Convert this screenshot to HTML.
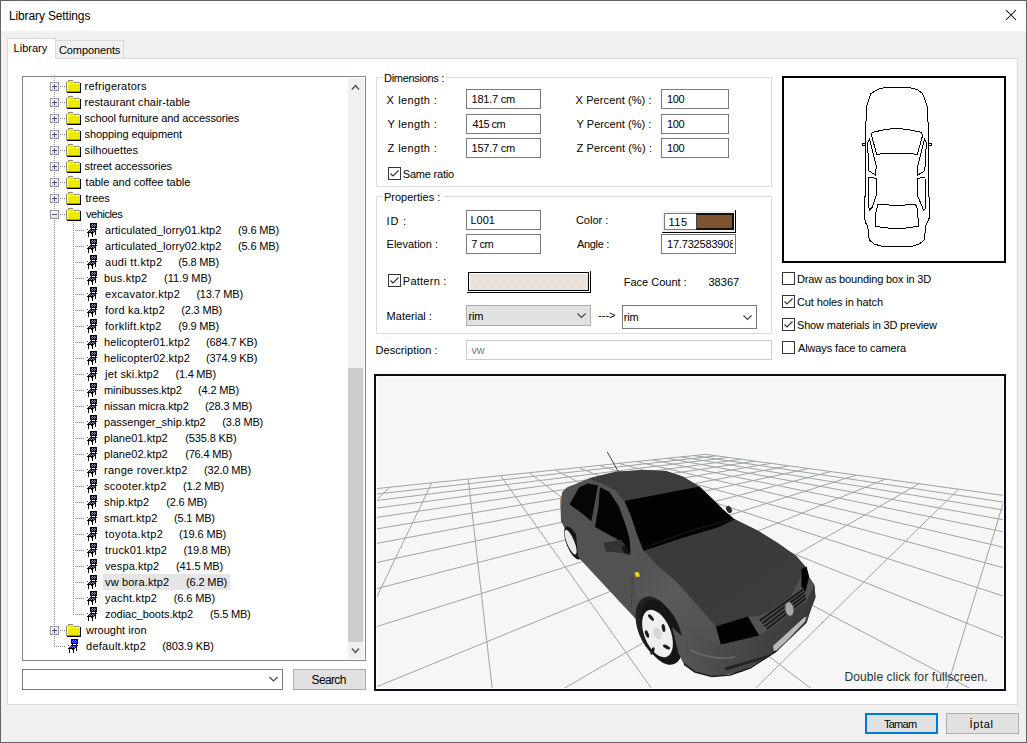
<!DOCTYPE html><html><head><meta charset="utf-8"><style>
html,body{margin:0;padding:0;}
body{width:1027px;height:743px;overflow:hidden;background:#f0f0f0;position:relative;font-family:"Liberation Sans", sans-serif;}
.t{position:absolute;white-space:pre;font-family:"Liberation Sans", sans-serif;}
.r{position:absolute;box-sizing:border-box;}
svg{position:absolute;left:0;top:0;}
</style></head><body><div class="r" style="left:0px;top:0px;width:1027px;height:743px;border:1px solid #636363;"></div><div class="r" style="left:1px;top:1px;width:1025px;height:30px;background:#fff;"></div><div class="t" style="left:9px;top:9px;font-size:12px;line-height:14px;color:#000;letter-spacing:-0.133px;">Library Settings</div><svg width="1027" height="40" style="left:0;top:0"><path d="M1006 10 L1016 20 M1016 10 L1006 20" stroke="#000" stroke-width="1.05"/></svg><div class="r" style="left:7px;top:58px;width:1011px;height:647px;background:#fff;border:1px solid #d9d9d9;"></div><div class="r" style="left:55px;top:40px;width:69px;height:19px;background:#f0f0f0;border:1px solid #d9d9d9;"></div><div class="r" style="left:7px;top:38px;width:49px;height:21px;background:#fff;border:1px solid #d9d9d9;border-bottom:none;"></div><div class="t" style="left:13.6px;top:42px;font-size:11px;line-height:13px;color:#000;letter-spacing:0.000px;">Library</div><div class="t" style="left:59px;top:44px;font-size:11px;line-height:13px;color:#000;letter-spacing:-0.111px;">Components</div><div class="r" style="left:22px;top:76px;width:344px;height:585px;background:#fff;border:1px solid #828790;"></div><div class="t" style="left:84.6px;top:80px;font-size:11px;line-height:13px;color:#000;letter-spacing:0.208px;">refrigerators</div><div class="t" style="left:84.6px;top:96px;font-size:11px;line-height:13px;color:#000;letter-spacing:0.081px;">restaurant chair-table</div><div class="t" style="left:84.6px;top:112px;font-size:11px;line-height:13px;color:#000;letter-spacing:-0.100px;">school furniture and accessories</div><div class="t" style="left:84.6px;top:128px;font-size:11px;line-height:13px;color:#000;letter-spacing:-0.094px;">shopping equipment</div><div class="t" style="left:84.6px;top:144px;font-size:11px;line-height:13px;color:#000;letter-spacing:0.080px;">silhouettes</div><div class="t" style="left:84.6px;top:160px;font-size:11px;line-height:13px;color:#000;letter-spacing:-0.076px;">street accessories</div><div class="t" style="left:85.6px;top:176px;font-size:11px;line-height:13px;color:#000;letter-spacing:-0.014px;">table and coffee table</div><div class="t" style="left:85.6px;top:192px;font-size:11px;line-height:13px;color:#000;letter-spacing:-0.050px;">trees</div><div class="t" style="left:86px;top:208px;font-size:11px;line-height:13px;color:#000;letter-spacing:-0.429px;">vehicles</div><div class="t" style="left:105px;top:224px;font-size:11px;line-height:13px;color:#000;letter-spacing:0.087px;">articulated_lorry01.ktp2</div><div class="t" style="left:238px;top:224px;font-size:11px;line-height:13px;color:#000;letter-spacing:-0.143px;">(9.6 MB)</div><div class="t" style="left:105px;top:240px;font-size:11px;line-height:13px;color:#000;letter-spacing:0.087px;">articulated_lorry02.ktp2</div><div class="t" style="left:238px;top:240px;font-size:11px;line-height:13px;color:#000;letter-spacing:-0.143px;">(5.6 MB)</div><div class="t" style="left:105px;top:256px;font-size:11px;line-height:13px;color:#000;letter-spacing:0.300px;">audi tt.ktp2</div><div class="t" style="left:178.3px;top:256px;font-size:11px;line-height:13px;color:#000;letter-spacing:-0.200px;">(5.8 MB)</div><div class="t" style="left:104px;top:272px;font-size:11px;line-height:13px;color:#000;letter-spacing:0.229px;">bus.ktp2</div><div class="t" style="left:164.1px;top:272px;font-size:11px;line-height:13px;color:#000;letter-spacing:-0.025px;">(11.9 MB)</div><div class="t" style="left:105px;top:288px;font-size:11px;line-height:13px;color:#000;letter-spacing:0.300px;">excavator.ktp2</div><div class="t" style="left:196.4px;top:288px;font-size:11px;line-height:13px;color:#000;letter-spacing:-0.200px;">(13.7 MB)</div><div class="t" style="left:105px;top:304px;font-size:11px;line-height:13px;color:#000;letter-spacing:0.209px;">ford ka.ktp2</div><div class="t" style="left:181.3px;top:304px;font-size:11px;line-height:13px;color:#000;letter-spacing:-0.171px;">(2.3 MB)</div><div class="t" style="left:105px;top:320px;font-size:11px;line-height:13px;color:#000;letter-spacing:0.275px;">forklift.ktp2</div><div class="t" style="left:178.3px;top:320px;font-size:11px;line-height:13px;color:#000;letter-spacing:-0.200px;">(9.9 MB)</div><div class="t" style="left:104px;top:336px;font-size:11px;line-height:13px;color:#000;letter-spacing:0.125px;">helicopter01.ktp2</div><div class="t" style="left:206.1px;top:336px;font-size:11px;line-height:13px;color:#000;letter-spacing:-0.144px;">(684.7 KB)</div><div class="t" style="left:104px;top:352px;font-size:11px;line-height:13px;color:#000;letter-spacing:0.125px;">helicopter02.ktp2</div><div class="t" style="left:206.1px;top:352px;font-size:11px;line-height:13px;color:#000;letter-spacing:-0.144px;">(374.9 KB)</div><div class="t" style="left:105px;top:368px;font-size:11px;line-height:13px;color:#000;letter-spacing:0.182px;">jet ski.ktp2</div><div class="t" style="left:175.5px;top:368px;font-size:11px;line-height:13px;color:#000;letter-spacing:-0.229px;">(1.4 MB)</div><div class="t" style="left:104px;top:384px;font-size:11px;line-height:13px;color:#000;letter-spacing:-0.064px;">minibusses.ktp2</div><div class="t" style="left:198.1px;top:384px;font-size:11px;line-height:13px;color:#000;letter-spacing:-0.171px;">(4.2 MB)</div><div class="t" style="left:104px;top:400px;font-size:11px;line-height:13px;color:#000;letter-spacing:-0.050px;">nissan micra.ktp2</div><div class="t" style="left:205px;top:400px;font-size:11px;line-height:13px;color:#000;letter-spacing:-0.138px;">(28.3 MB)</div><div class="t" style="left:104px;top:416px;font-size:11px;line-height:13px;color:#000;letter-spacing:0.011px;">passenger_ship.ktp2</div><div class="t" style="left:222.2px;top:416px;font-size:11px;line-height:13px;color:#000;letter-spacing:-0.157px;">(3.8 MB)</div><div class="t" style="left:104px;top:432px;font-size:11px;line-height:13px;color:#000;letter-spacing:0.064px;">plane01.ktp2</div><div class="t" style="left:185.2px;top:432px;font-size:11px;line-height:13px;color:#000;letter-spacing:-0.122px;">(535.8 KB)</div><div class="t" style="left:104px;top:448px;font-size:11px;line-height:13px;color:#000;letter-spacing:0.064px;">plane02.ktp2</div><div class="t" style="left:185.2px;top:448px;font-size:11px;line-height:13px;color:#000;letter-spacing:-0.175px;">(76.4 MB)</div><div class="t" style="left:104px;top:464px;font-size:11px;line-height:13px;color:#000;letter-spacing:0.260px;">range rover.ktp2</div><div class="t" style="left:204.1px;top:464px;font-size:11px;line-height:13px;color:#000;letter-spacing:-0.162px;">(32.0 MB)</div><div class="t" style="left:104px;top:480px;font-size:11px;line-height:13px;color:#000;letter-spacing:0.273px;">scooter.ktp2</div><div class="t" style="left:183px;top:480px;font-size:11px;line-height:13px;color:#000;letter-spacing:-0.157px;">(1.2 MB)</div><div class="t" style="left:104px;top:496px;font-size:11px;line-height:13px;color:#000;letter-spacing:0.150px;">ship.ktp2</div><div class="t" style="left:166.2px;top:496px;font-size:11px;line-height:13px;color:#000;letter-spacing:-0.157px;">(2.6 MB)</div><div class="t" style="left:104px;top:512px;font-size:11px;line-height:13px;color:#000;letter-spacing:0.222px;">smart.ktp2</div><div class="t" style="left:174px;top:512px;font-size:11px;line-height:13px;color:#000;letter-spacing:-0.171px;">(5.1 MB)</div><div class="t" style="left:105px;top:528px;font-size:11px;line-height:13px;color:#000;letter-spacing:0.410px;">toyota.ktp2</div><div class="t" style="left:179.1px;top:528px;font-size:11px;line-height:13px;color:#000;letter-spacing:-0.138px;">(19.6 MB)</div><div class="t" style="left:105px;top:544px;font-size:11px;line-height:13px;color:#000;letter-spacing:0.182px;">truck01.ktp2</div><div class="t" style="left:183.4px;top:544px;font-size:11px;line-height:13px;color:#000;letter-spacing:-0.138px;">(19.8 MB)</div><div class="t" style="left:105px;top:560px;font-size:11px;line-height:13px;color:#000;letter-spacing:0.100px;">vespa.ktp2</div><div class="t" style="left:176.1px;top:560px;font-size:11px;line-height:13px;color:#000;letter-spacing:-0.162px;">(41.5 MB)</div><div class="r" style="left:103px;top:574px;width:127px;height:16px;background:#e5e5e5;"></div><div class="t" style="left:105px;top:576px;font-size:11px;line-height:13px;color:#000;letter-spacing:0.164px;">vw bora.ktp2</div><div class="t" style="left:185.9px;top:576px;font-size:11px;line-height:13px;color:#000;letter-spacing:-0.114px;">(6.2 MB)</div><div class="t" style="left:105px;top:592px;font-size:11px;line-height:13px;color:#000;letter-spacing:0.200px;">yacht.ktp2</div><div class="t" style="left:173.7px;top:592px;font-size:11px;line-height:13px;color:#000;letter-spacing:-0.086px;">(6.6 MB)</div><div class="t" style="left:105px;top:608px;font-size:11px;line-height:13px;color:#000;letter-spacing:-0.031px;">zodiac_boots.ktp2</div><div class="t" style="left:210px;top:608px;font-size:11px;line-height:13px;color:#000;letter-spacing:-0.200px;">(5.5 MB)</div><div class="t" style="left:86px;top:624px;font-size:11px;line-height:13px;color:#000;letter-spacing:0.000px;">wrought iron</div><div class="t" style="left:86px;top:640px;font-size:11px;line-height:13px;color:#000;letter-spacing:0.273px;">default.ktp2</div><div class="t" style="left:162.3px;top:640px;font-size:11px;line-height:13px;color:#000;letter-spacing:-0.111px;">(803.9 KB)</div><svg width="1027" height="743" style="left:0;top:0;pointer-events:none" shape-rendering="crispEdges"><defs>
<linearGradient id="pb" x1="0" y1="0" x2="0" y2="1"><stop offset="0" stop-color="#fff"/><stop offset="0.5" stop-color="#f4f4f4"/><stop offset="1" stop-color="#dadada"/></linearGradient>
<pattern id="ychk" x="0" y="0" width="2" height="2" patternUnits="userSpaceOnUse"><rect width="2" height="2" fill="#c6c68a"/><rect width="1" height="1" fill="#ffff00"/><rect x="1" y="1" width="1" height="1" fill="#ffff00"/></pattern>
<pattern id="bchk" x="0" y="0" width="2" height="2" patternUnits="userSpaceOnUse"><rect width="2" height="2" fill="#8080a0"/><rect width="1" height="1" fill="#0000ff"/><rect x="1" y="1" width="1" height="1" fill="#0000ff"/></pattern>
<g id="fold" shape-rendering="crispEdges">
<rect x="2" y="2" width="5" height="1" fill="#8c8c8c"/>
<rect x="1" y="3" width="7" height="2" fill="url(#ychk)"/>
<rect x="0" y="4" width="1" height="10" fill="#8c8c8c"/>
<rect x="8" y="4" width="6" height="1" fill="#8c8c8c"/>
<rect x="1" y="5" width="13" height="1" fill="#ffffff"/>
<rect x="1" y="6" width="1" height="7" fill="#ffffff"/>
<rect x="2" y="6" width="12" height="7" fill="url(#ychk)"/>
<rect x="0" y="13" width="14" height="1" fill="#8c8c8c"/>
<rect x="14" y="5" width="1" height="10" fill="#000"/>
<rect x="1" y="14" width="14" height="1" fill="#000"/>
</g>
<g id="chair" shape-rendering="crispEdges">
<rect x="3" y="1" width="7" height="5" fill="#000"/>
<rect x="4" y="2" width="5" height="3" fill="url(#bchk)"/>
<rect x="4" y="6" width="1" height="1" fill="#000"/><rect x="8" y="6" width="1" height="1" fill="#000"/>
<rect x="3" y="7" width="7" height="1" fill="#000"/>
<rect x="0" y="7" width="1" height="1" fill="#008080"/>
<rect x="2" y="8" width="1" height="1" fill="#000"/><rect x="3" y="8" width="5" height="1" fill="url(#bchk)"/><rect x="8" y="8" width="1" height="5" fill="#000"/>
<rect x="1" y="9" width="1" height="1" fill="#000"/><rect x="2" y="9" width="5" height="1" fill="url(#bchk)"/><rect x="7" y="9" width="1" height="1" fill="#000"/>
<rect x="0" y="10" width="7" height="1" fill="#000"/>
<rect x="1" y="11" width="1" height="4" fill="#000"/><rect x="5" y="11" width="1" height="4" fill="#000"/><rect x="4" y="11" width="1" height="1" fill="#000"/>
</g>
</defs><rect x="50.5" y="82.5" width="8" height="8" rx="1" fill="url(#pb)" stroke="#969696"/><rect x="52" y="86" width="5" height="1" fill="#3a5795"/><rect x="54" y="84" width="1" height="5" fill="#3a5795"/><rect x="60" y="86" width="1" height="1" fill="#8e8e8e"/><rect x="62" y="86" width="1" height="1" fill="#8e8e8e"/><rect x="64" y="86" width="1" height="1" fill="#8e8e8e"/><use href="#fold" x="66" y="78"/><rect x="50.5" y="98.5" width="8" height="8" rx="1" fill="url(#pb)" stroke="#969696"/><rect x="52" y="102" width="5" height="1" fill="#3a5795"/><rect x="54" y="100" width="1" height="5" fill="#3a5795"/><rect x="60" y="102" width="1" height="1" fill="#8e8e8e"/><rect x="62" y="102" width="1" height="1" fill="#8e8e8e"/><rect x="64" y="102" width="1" height="1" fill="#8e8e8e"/><use href="#fold" x="66" y="94"/><rect x="50.5" y="114.5" width="8" height="8" rx="1" fill="url(#pb)" stroke="#969696"/><rect x="52" y="118" width="5" height="1" fill="#3a5795"/><rect x="54" y="116" width="1" height="5" fill="#3a5795"/><rect x="60" y="118" width="1" height="1" fill="#8e8e8e"/><rect x="62" y="118" width="1" height="1" fill="#8e8e8e"/><rect x="64" y="118" width="1" height="1" fill="#8e8e8e"/><use href="#fold" x="66" y="110"/><rect x="50.5" y="130.5" width="8" height="8" rx="1" fill="url(#pb)" stroke="#969696"/><rect x="52" y="134" width="5" height="1" fill="#3a5795"/><rect x="54" y="132" width="1" height="5" fill="#3a5795"/><rect x="60" y="134" width="1" height="1" fill="#8e8e8e"/><rect x="62" y="134" width="1" height="1" fill="#8e8e8e"/><rect x="64" y="134" width="1" height="1" fill="#8e8e8e"/><use href="#fold" x="66" y="126"/><rect x="50.5" y="146.5" width="8" height="8" rx="1" fill="url(#pb)" stroke="#969696"/><rect x="52" y="150" width="5" height="1" fill="#3a5795"/><rect x="54" y="148" width="1" height="5" fill="#3a5795"/><rect x="60" y="150" width="1" height="1" fill="#8e8e8e"/><rect x="62" y="150" width="1" height="1" fill="#8e8e8e"/><rect x="64" y="150" width="1" height="1" fill="#8e8e8e"/><use href="#fold" x="66" y="142"/><rect x="50.5" y="162.5" width="8" height="8" rx="1" fill="url(#pb)" stroke="#969696"/><rect x="52" y="166" width="5" height="1" fill="#3a5795"/><rect x="54" y="164" width="1" height="5" fill="#3a5795"/><rect x="60" y="166" width="1" height="1" fill="#8e8e8e"/><rect x="62" y="166" width="1" height="1" fill="#8e8e8e"/><rect x="64" y="166" width="1" height="1" fill="#8e8e8e"/><use href="#fold" x="66" y="158"/><rect x="50.5" y="178.5" width="8" height="8" rx="1" fill="url(#pb)" stroke="#969696"/><rect x="52" y="182" width="5" height="1" fill="#3a5795"/><rect x="54" y="180" width="1" height="5" fill="#3a5795"/><rect x="60" y="182" width="1" height="1" fill="#8e8e8e"/><rect x="62" y="182" width="1" height="1" fill="#8e8e8e"/><rect x="64" y="182" width="1" height="1" fill="#8e8e8e"/><use href="#fold" x="66" y="174"/><rect x="50.5" y="194.5" width="8" height="8" rx="1" fill="url(#pb)" stroke="#969696"/><rect x="52" y="198" width="5" height="1" fill="#3a5795"/><rect x="54" y="196" width="1" height="5" fill="#3a5795"/><rect x="60" y="198" width="1" height="1" fill="#8e8e8e"/><rect x="62" y="198" width="1" height="1" fill="#8e8e8e"/><rect x="64" y="198" width="1" height="1" fill="#8e8e8e"/><use href="#fold" x="66" y="190"/><rect x="50.5" y="210.5" width="8" height="8" rx="1" fill="url(#pb)" stroke="#969696"/><rect x="52" y="214" width="5" height="1" fill="#3a5795"/><rect x="60" y="214" width="1" height="1" fill="#8e8e8e"/><rect x="62" y="214" width="1" height="1" fill="#8e8e8e"/><rect x="64" y="214" width="1" height="1" fill="#8e8e8e"/><use href="#fold" x="66" y="206"/><rect x="75" y="230" width="1" height="1" fill="#8e8e8e"/><rect x="77" y="230" width="1" height="1" fill="#8e8e8e"/><rect x="79" y="230" width="1" height="1" fill="#8e8e8e"/><rect x="81" y="230" width="1" height="1" fill="#8e8e8e"/><rect x="83" y="230" width="1" height="1" fill="#8e8e8e"/><use href="#chair" x="87" y="222"/><rect x="75" y="246" width="1" height="1" fill="#8e8e8e"/><rect x="77" y="246" width="1" height="1" fill="#8e8e8e"/><rect x="79" y="246" width="1" height="1" fill="#8e8e8e"/><rect x="81" y="246" width="1" height="1" fill="#8e8e8e"/><rect x="83" y="246" width="1" height="1" fill="#8e8e8e"/><use href="#chair" x="87" y="238"/><rect x="75" y="262" width="1" height="1" fill="#8e8e8e"/><rect x="77" y="262" width="1" height="1" fill="#8e8e8e"/><rect x="79" y="262" width="1" height="1" fill="#8e8e8e"/><rect x="81" y="262" width="1" height="1" fill="#8e8e8e"/><rect x="83" y="262" width="1" height="1" fill="#8e8e8e"/><use href="#chair" x="87" y="254"/><rect x="75" y="278" width="1" height="1" fill="#8e8e8e"/><rect x="77" y="278" width="1" height="1" fill="#8e8e8e"/><rect x="79" y="278" width="1" height="1" fill="#8e8e8e"/><rect x="81" y="278" width="1" height="1" fill="#8e8e8e"/><rect x="83" y="278" width="1" height="1" fill="#8e8e8e"/><use href="#chair" x="87" y="270"/><rect x="75" y="294" width="1" height="1" fill="#8e8e8e"/><rect x="77" y="294" width="1" height="1" fill="#8e8e8e"/><rect x="79" y="294" width="1" height="1" fill="#8e8e8e"/><rect x="81" y="294" width="1" height="1" fill="#8e8e8e"/><rect x="83" y="294" width="1" height="1" fill="#8e8e8e"/><use href="#chair" x="87" y="286"/><rect x="75" y="310" width="1" height="1" fill="#8e8e8e"/><rect x="77" y="310" width="1" height="1" fill="#8e8e8e"/><rect x="79" y="310" width="1" height="1" fill="#8e8e8e"/><rect x="81" y="310" width="1" height="1" fill="#8e8e8e"/><rect x="83" y="310" width="1" height="1" fill="#8e8e8e"/><use href="#chair" x="87" y="302"/><rect x="75" y="326" width="1" height="1" fill="#8e8e8e"/><rect x="77" y="326" width="1" height="1" fill="#8e8e8e"/><rect x="79" y="326" width="1" height="1" fill="#8e8e8e"/><rect x="81" y="326" width="1" height="1" fill="#8e8e8e"/><rect x="83" y="326" width="1" height="1" fill="#8e8e8e"/><use href="#chair" x="87" y="318"/><rect x="75" y="342" width="1" height="1" fill="#8e8e8e"/><rect x="77" y="342" width="1" height="1" fill="#8e8e8e"/><rect x="79" y="342" width="1" height="1" fill="#8e8e8e"/><rect x="81" y="342" width="1" height="1" fill="#8e8e8e"/><rect x="83" y="342" width="1" height="1" fill="#8e8e8e"/><use href="#chair" x="87" y="334"/><rect x="75" y="358" width="1" height="1" fill="#8e8e8e"/><rect x="77" y="358" width="1" height="1" fill="#8e8e8e"/><rect x="79" y="358" width="1" height="1" fill="#8e8e8e"/><rect x="81" y="358" width="1" height="1" fill="#8e8e8e"/><rect x="83" y="358" width="1" height="1" fill="#8e8e8e"/><use href="#chair" x="87" y="350"/><rect x="75" y="374" width="1" height="1" fill="#8e8e8e"/><rect x="77" y="374" width="1" height="1" fill="#8e8e8e"/><rect x="79" y="374" width="1" height="1" fill="#8e8e8e"/><rect x="81" y="374" width="1" height="1" fill="#8e8e8e"/><rect x="83" y="374" width="1" height="1" fill="#8e8e8e"/><use href="#chair" x="87" y="366"/><rect x="75" y="390" width="1" height="1" fill="#8e8e8e"/><rect x="77" y="390" width="1" height="1" fill="#8e8e8e"/><rect x="79" y="390" width="1" height="1" fill="#8e8e8e"/><rect x="81" y="390" width="1" height="1" fill="#8e8e8e"/><rect x="83" y="390" width="1" height="1" fill="#8e8e8e"/><use href="#chair" x="87" y="382"/><rect x="75" y="406" width="1" height="1" fill="#8e8e8e"/><rect x="77" y="406" width="1" height="1" fill="#8e8e8e"/><rect x="79" y="406" width="1" height="1" fill="#8e8e8e"/><rect x="81" y="406" width="1" height="1" fill="#8e8e8e"/><rect x="83" y="406" width="1" height="1" fill="#8e8e8e"/><use href="#chair" x="87" y="398"/><rect x="75" y="422" width="1" height="1" fill="#8e8e8e"/><rect x="77" y="422" width="1" height="1" fill="#8e8e8e"/><rect x="79" y="422" width="1" height="1" fill="#8e8e8e"/><rect x="81" y="422" width="1" height="1" fill="#8e8e8e"/><rect x="83" y="422" width="1" height="1" fill="#8e8e8e"/><use href="#chair" x="87" y="414"/><rect x="75" y="438" width="1" height="1" fill="#8e8e8e"/><rect x="77" y="438" width="1" height="1" fill="#8e8e8e"/><rect x="79" y="438" width="1" height="1" fill="#8e8e8e"/><rect x="81" y="438" width="1" height="1" fill="#8e8e8e"/><rect x="83" y="438" width="1" height="1" fill="#8e8e8e"/><use href="#chair" x="87" y="430"/><rect x="75" y="454" width="1" height="1" fill="#8e8e8e"/><rect x="77" y="454" width="1" height="1" fill="#8e8e8e"/><rect x="79" y="454" width="1" height="1" fill="#8e8e8e"/><rect x="81" y="454" width="1" height="1" fill="#8e8e8e"/><rect x="83" y="454" width="1" height="1" fill="#8e8e8e"/><use href="#chair" x="87" y="446"/><rect x="75" y="470" width="1" height="1" fill="#8e8e8e"/><rect x="77" y="470" width="1" height="1" fill="#8e8e8e"/><rect x="79" y="470" width="1" height="1" fill="#8e8e8e"/><rect x="81" y="470" width="1" height="1" fill="#8e8e8e"/><rect x="83" y="470" width="1" height="1" fill="#8e8e8e"/><use href="#chair" x="87" y="462"/><rect x="75" y="486" width="1" height="1" fill="#8e8e8e"/><rect x="77" y="486" width="1" height="1" fill="#8e8e8e"/><rect x="79" y="486" width="1" height="1" fill="#8e8e8e"/><rect x="81" y="486" width="1" height="1" fill="#8e8e8e"/><rect x="83" y="486" width="1" height="1" fill="#8e8e8e"/><use href="#chair" x="87" y="478"/><rect x="75" y="502" width="1" height="1" fill="#8e8e8e"/><rect x="77" y="502" width="1" height="1" fill="#8e8e8e"/><rect x="79" y="502" width="1" height="1" fill="#8e8e8e"/><rect x="81" y="502" width="1" height="1" fill="#8e8e8e"/><rect x="83" y="502" width="1" height="1" fill="#8e8e8e"/><use href="#chair" x="87" y="494"/><rect x="75" y="518" width="1" height="1" fill="#8e8e8e"/><rect x="77" y="518" width="1" height="1" fill="#8e8e8e"/><rect x="79" y="518" width="1" height="1" fill="#8e8e8e"/><rect x="81" y="518" width="1" height="1" fill="#8e8e8e"/><rect x="83" y="518" width="1" height="1" fill="#8e8e8e"/><use href="#chair" x="87" y="510"/><rect x="75" y="534" width="1" height="1" fill="#8e8e8e"/><rect x="77" y="534" width="1" height="1" fill="#8e8e8e"/><rect x="79" y="534" width="1" height="1" fill="#8e8e8e"/><rect x="81" y="534" width="1" height="1" fill="#8e8e8e"/><rect x="83" y="534" width="1" height="1" fill="#8e8e8e"/><use href="#chair" x="87" y="526"/><rect x="75" y="550" width="1" height="1" fill="#8e8e8e"/><rect x="77" y="550" width="1" height="1" fill="#8e8e8e"/><rect x="79" y="550" width="1" height="1" fill="#8e8e8e"/><rect x="81" y="550" width="1" height="1" fill="#8e8e8e"/><rect x="83" y="550" width="1" height="1" fill="#8e8e8e"/><use href="#chair" x="87" y="542"/><rect x="75" y="566" width="1" height="1" fill="#8e8e8e"/><rect x="77" y="566" width="1" height="1" fill="#8e8e8e"/><rect x="79" y="566" width="1" height="1" fill="#8e8e8e"/><rect x="81" y="566" width="1" height="1" fill="#8e8e8e"/><rect x="83" y="566" width="1" height="1" fill="#8e8e8e"/><use href="#chair" x="87" y="558"/><rect x="75" y="582" width="1" height="1" fill="#8e8e8e"/><rect x="77" y="582" width="1" height="1" fill="#8e8e8e"/><rect x="79" y="582" width="1" height="1" fill="#8e8e8e"/><rect x="81" y="582" width="1" height="1" fill="#8e8e8e"/><rect x="83" y="582" width="1" height="1" fill="#8e8e8e"/><use href="#chair" x="87" y="574"/><rect x="75" y="598" width="1" height="1" fill="#8e8e8e"/><rect x="77" y="598" width="1" height="1" fill="#8e8e8e"/><rect x="79" y="598" width="1" height="1" fill="#8e8e8e"/><rect x="81" y="598" width="1" height="1" fill="#8e8e8e"/><rect x="83" y="598" width="1" height="1" fill="#8e8e8e"/><use href="#chair" x="87" y="590"/><rect x="75" y="614" width="1" height="1" fill="#8e8e8e"/><rect x="77" y="614" width="1" height="1" fill="#8e8e8e"/><rect x="79" y="614" width="1" height="1" fill="#8e8e8e"/><rect x="81" y="614" width="1" height="1" fill="#8e8e8e"/><rect x="83" y="614" width="1" height="1" fill="#8e8e8e"/><use href="#chair" x="87" y="606"/><rect x="50.5" y="626.5" width="8" height="8" rx="1" fill="url(#pb)" stroke="#969696"/><rect x="52" y="630" width="5" height="1" fill="#3a5795"/><rect x="54" y="628" width="1" height="5" fill="#3a5795"/><rect x="60" y="630" width="1" height="1" fill="#8e8e8e"/><rect x="62" y="630" width="1" height="1" fill="#8e8e8e"/><rect x="64" y="630" width="1" height="1" fill="#8e8e8e"/><use href="#fold" x="66" y="622"/><rect x="56" y="646" width="1" height="1" fill="#8e8e8e"/><rect x="58" y="646" width="1" height="1" fill="#8e8e8e"/><rect x="60" y="646" width="1" height="1" fill="#8e8e8e"/><rect x="62" y="646" width="1" height="1" fill="#8e8e8e"/><rect x="64" y="646" width="1" height="1" fill="#8e8e8e"/><use href="#chair" x="68" y="638"/><rect x="54" y="78" width="1" height="1" fill="#8e8e8e"/><rect x="54" y="80" width="1" height="1" fill="#8e8e8e"/><rect x="54" y="92" width="1" height="1" fill="#8e8e8e"/><rect x="54" y="94" width="1" height="1" fill="#8e8e8e"/><rect x="54" y="96" width="1" height="1" fill="#8e8e8e"/><rect x="54" y="108" width="1" height="1" fill="#8e8e8e"/><rect x="54" y="110" width="1" height="1" fill="#8e8e8e"/><rect x="54" y="112" width="1" height="1" fill="#8e8e8e"/><rect x="54" y="124" width="1" height="1" fill="#8e8e8e"/><rect x="54" y="126" width="1" height="1" fill="#8e8e8e"/><rect x="54" y="128" width="1" height="1" fill="#8e8e8e"/><rect x="54" y="140" width="1" height="1" fill="#8e8e8e"/><rect x="54" y="142" width="1" height="1" fill="#8e8e8e"/><rect x="54" y="144" width="1" height="1" fill="#8e8e8e"/><rect x="54" y="156" width="1" height="1" fill="#8e8e8e"/><rect x="54" y="158" width="1" height="1" fill="#8e8e8e"/><rect x="54" y="160" width="1" height="1" fill="#8e8e8e"/><rect x="54" y="172" width="1" height="1" fill="#8e8e8e"/><rect x="54" y="174" width="1" height="1" fill="#8e8e8e"/><rect x="54" y="176" width="1" height="1" fill="#8e8e8e"/><rect x="54" y="188" width="1" height="1" fill="#8e8e8e"/><rect x="54" y="190" width="1" height="1" fill="#8e8e8e"/><rect x="54" y="192" width="1" height="1" fill="#8e8e8e"/><rect x="54" y="204" width="1" height="1" fill="#8e8e8e"/><rect x="54" y="206" width="1" height="1" fill="#8e8e8e"/><rect x="54" y="208" width="1" height="1" fill="#8e8e8e"/><rect x="54" y="220" width="1" height="1" fill="#8e8e8e"/><rect x="54" y="222" width="1" height="1" fill="#8e8e8e"/><rect x="54" y="224" width="1" height="1" fill="#8e8e8e"/><rect x="54" y="226" width="1" height="1" fill="#8e8e8e"/><rect x="54" y="228" width="1" height="1" fill="#8e8e8e"/><rect x="54" y="230" width="1" height="1" fill="#8e8e8e"/><rect x="54" y="232" width="1" height="1" fill="#8e8e8e"/><rect x="54" y="234" width="1" height="1" fill="#8e8e8e"/><rect x="54" y="236" width="1" height="1" fill="#8e8e8e"/><rect x="54" y="238" width="1" height="1" fill="#8e8e8e"/><rect x="54" y="240" width="1" height="1" fill="#8e8e8e"/><rect x="54" y="242" width="1" height="1" fill="#8e8e8e"/><rect x="54" y="244" width="1" height="1" fill="#8e8e8e"/><rect x="54" y="246" width="1" height="1" fill="#8e8e8e"/><rect x="54" y="248" width="1" height="1" fill="#8e8e8e"/><rect x="54" y="250" width="1" height="1" fill="#8e8e8e"/><rect x="54" y="252" width="1" height="1" fill="#8e8e8e"/><rect x="54" y="254" width="1" height="1" fill="#8e8e8e"/><rect x="54" y="256" width="1" height="1" fill="#8e8e8e"/><rect x="54" y="258" width="1" height="1" fill="#8e8e8e"/><rect x="54" y="260" width="1" height="1" fill="#8e8e8e"/><rect x="54" y="262" width="1" height="1" fill="#8e8e8e"/><rect x="54" y="264" width="1" height="1" fill="#8e8e8e"/><rect x="54" y="266" width="1" height="1" fill="#8e8e8e"/><rect x="54" y="268" width="1" height="1" fill="#8e8e8e"/><rect x="54" y="270" width="1" height="1" fill="#8e8e8e"/><rect x="54" y="272" width="1" height="1" fill="#8e8e8e"/><rect x="54" y="274" width="1" height="1" fill="#8e8e8e"/><rect x="54" y="276" width="1" height="1" fill="#8e8e8e"/><rect x="54" y="278" width="1" height="1" fill="#8e8e8e"/><rect x="54" y="280" width="1" height="1" fill="#8e8e8e"/><rect x="54" y="282" width="1" height="1" fill="#8e8e8e"/><rect x="54" y="284" width="1" height="1" fill="#8e8e8e"/><rect x="54" y="286" width="1" height="1" fill="#8e8e8e"/><rect x="54" y="288" width="1" height="1" fill="#8e8e8e"/><rect x="54" y="290" width="1" height="1" fill="#8e8e8e"/><rect x="54" y="292" width="1" height="1" fill="#8e8e8e"/><rect x="54" y="294" width="1" height="1" fill="#8e8e8e"/><rect x="54" y="296" width="1" height="1" fill="#8e8e8e"/><rect x="54" y="298" width="1" height="1" fill="#8e8e8e"/><rect x="54" y="300" width="1" height="1" fill="#8e8e8e"/><rect x="54" y="302" width="1" height="1" fill="#8e8e8e"/><rect x="54" y="304" width="1" height="1" fill="#8e8e8e"/><rect x="54" y="306" width="1" height="1" fill="#8e8e8e"/><rect x="54" y="308" width="1" height="1" fill="#8e8e8e"/><rect x="54" y="310" width="1" height="1" fill="#8e8e8e"/><rect x="54" y="312" width="1" height="1" fill="#8e8e8e"/><rect x="54" y="314" width="1" height="1" fill="#8e8e8e"/><rect x="54" y="316" width="1" height="1" fill="#8e8e8e"/><rect x="54" y="318" width="1" height="1" fill="#8e8e8e"/><rect x="54" y="320" width="1" height="1" fill="#8e8e8e"/><rect x="54" y="322" width="1" height="1" fill="#8e8e8e"/><rect x="54" y="324" width="1" height="1" fill="#8e8e8e"/><rect x="54" y="326" width="1" height="1" fill="#8e8e8e"/><rect x="54" y="328" width="1" height="1" fill="#8e8e8e"/><rect x="54" y="330" width="1" height="1" fill="#8e8e8e"/><rect x="54" y="332" width="1" height="1" fill="#8e8e8e"/><rect x="54" y="334" width="1" height="1" fill="#8e8e8e"/><rect x="54" y="336" width="1" height="1" fill="#8e8e8e"/><rect x="54" y="338" width="1" height="1" fill="#8e8e8e"/><rect x="54" y="340" width="1" height="1" fill="#8e8e8e"/><rect x="54" y="342" width="1" height="1" fill="#8e8e8e"/><rect x="54" y="344" width="1" height="1" fill="#8e8e8e"/><rect x="54" y="346" width="1" height="1" fill="#8e8e8e"/><rect x="54" y="348" width="1" height="1" fill="#8e8e8e"/><rect x="54" y="350" width="1" height="1" fill="#8e8e8e"/><rect x="54" y="352" width="1" height="1" fill="#8e8e8e"/><rect x="54" y="354" width="1" height="1" fill="#8e8e8e"/><rect x="54" y="356" width="1" height="1" fill="#8e8e8e"/><rect x="54" y="358" width="1" height="1" fill="#8e8e8e"/><rect x="54" y="360" width="1" height="1" fill="#8e8e8e"/><rect x="54" y="362" width="1" height="1" fill="#8e8e8e"/><rect x="54" y="364" width="1" height="1" fill="#8e8e8e"/><rect x="54" y="366" width="1" height="1" fill="#8e8e8e"/><rect x="54" y="368" width="1" height="1" fill="#8e8e8e"/><rect x="54" y="370" width="1" height="1" fill="#8e8e8e"/><rect x="54" y="372" width="1" height="1" fill="#8e8e8e"/><rect x="54" y="374" width="1" height="1" fill="#8e8e8e"/><rect x="54" y="376" width="1" height="1" fill="#8e8e8e"/><rect x="54" y="378" width="1" height="1" fill="#8e8e8e"/><rect x="54" y="380" width="1" height="1" fill="#8e8e8e"/><rect x="54" y="382" width="1" height="1" fill="#8e8e8e"/><rect x="54" y="384" width="1" height="1" fill="#8e8e8e"/><rect x="54" y="386" width="1" height="1" fill="#8e8e8e"/><rect x="54" y="388" width="1" height="1" fill="#8e8e8e"/><rect x="54" y="390" width="1" height="1" fill="#8e8e8e"/><rect x="54" y="392" width="1" height="1" fill="#8e8e8e"/><rect x="54" y="394" width="1" height="1" fill="#8e8e8e"/><rect x="54" y="396" width="1" height="1" fill="#8e8e8e"/><rect x="54" y="398" width="1" height="1" fill="#8e8e8e"/><rect x="54" y="400" width="1" height="1" fill="#8e8e8e"/><rect x="54" y="402" width="1" height="1" fill="#8e8e8e"/><rect x="54" y="404" width="1" height="1" fill="#8e8e8e"/><rect x="54" y="406" width="1" height="1" fill="#8e8e8e"/><rect x="54" y="408" width="1" height="1" fill="#8e8e8e"/><rect x="54" y="410" width="1" height="1" fill="#8e8e8e"/><rect x="54" y="412" width="1" height="1" fill="#8e8e8e"/><rect x="54" y="414" width="1" height="1" fill="#8e8e8e"/><rect x="54" y="416" width="1" height="1" fill="#8e8e8e"/><rect x="54" y="418" width="1" height="1" fill="#8e8e8e"/><rect x="54" y="420" width="1" height="1" fill="#8e8e8e"/><rect x="54" y="422" width="1" height="1" fill="#8e8e8e"/><rect x="54" y="424" width="1" height="1" fill="#8e8e8e"/><rect x="54" y="426" width="1" height="1" fill="#8e8e8e"/><rect x="54" y="428" width="1" height="1" fill="#8e8e8e"/><rect x="54" y="430" width="1" height="1" fill="#8e8e8e"/><rect x="54" y="432" width="1" height="1" fill="#8e8e8e"/><rect x="54" y="434" width="1" height="1" fill="#8e8e8e"/><rect x="54" y="436" width="1" height="1" fill="#8e8e8e"/><rect x="54" y="438" width="1" height="1" fill="#8e8e8e"/><rect x="54" y="440" width="1" height="1" fill="#8e8e8e"/><rect x="54" y="442" width="1" height="1" fill="#8e8e8e"/><rect x="54" y="444" width="1" height="1" fill="#8e8e8e"/><rect x="54" y="446" width="1" height="1" fill="#8e8e8e"/><rect x="54" y="448" width="1" height="1" fill="#8e8e8e"/><rect x="54" y="450" width="1" height="1" fill="#8e8e8e"/><rect x="54" y="452" width="1" height="1" fill="#8e8e8e"/><rect x="54" y="454" width="1" height="1" fill="#8e8e8e"/><rect x="54" y="456" width="1" height="1" fill="#8e8e8e"/><rect x="54" y="458" width="1" height="1" fill="#8e8e8e"/><rect x="54" y="460" width="1" height="1" fill="#8e8e8e"/><rect x="54" y="462" width="1" height="1" fill="#8e8e8e"/><rect x="54" y="464" width="1" height="1" fill="#8e8e8e"/><rect x="54" y="466" width="1" height="1" fill="#8e8e8e"/><rect x="54" y="468" width="1" height="1" fill="#8e8e8e"/><rect x="54" y="470" width="1" height="1" fill="#8e8e8e"/><rect x="54" y="472" width="1" height="1" fill="#8e8e8e"/><rect x="54" y="474" width="1" height="1" fill="#8e8e8e"/><rect x="54" y="476" width="1" height="1" fill="#8e8e8e"/><rect x="54" y="478" width="1" height="1" fill="#8e8e8e"/><rect x="54" y="480" width="1" height="1" fill="#8e8e8e"/><rect x="54" y="482" width="1" height="1" fill="#8e8e8e"/><rect x="54" y="484" width="1" height="1" fill="#8e8e8e"/><rect x="54" y="486" width="1" height="1" fill="#8e8e8e"/><rect x="54" y="488" width="1" height="1" fill="#8e8e8e"/><rect x="54" y="490" width="1" height="1" fill="#8e8e8e"/><rect x="54" y="492" width="1" height="1" fill="#8e8e8e"/><rect x="54" y="494" width="1" height="1" fill="#8e8e8e"/><rect x="54" y="496" width="1" height="1" fill="#8e8e8e"/><rect x="54" y="498" width="1" height="1" fill="#8e8e8e"/><rect x="54" y="500" width="1" height="1" fill="#8e8e8e"/><rect x="54" y="502" width="1" height="1" fill="#8e8e8e"/><rect x="54" y="504" width="1" height="1" fill="#8e8e8e"/><rect x="54" y="506" width="1" height="1" fill="#8e8e8e"/><rect x="54" y="508" width="1" height="1" fill="#8e8e8e"/><rect x="54" y="510" width="1" height="1" fill="#8e8e8e"/><rect x="54" y="512" width="1" height="1" fill="#8e8e8e"/><rect x="54" y="514" width="1" height="1" fill="#8e8e8e"/><rect x="54" y="516" width="1" height="1" fill="#8e8e8e"/><rect x="54" y="518" width="1" height="1" fill="#8e8e8e"/><rect x="54" y="520" width="1" height="1" fill="#8e8e8e"/><rect x="54" y="522" width="1" height="1" fill="#8e8e8e"/><rect x="54" y="524" width="1" height="1" fill="#8e8e8e"/><rect x="54" y="526" width="1" height="1" fill="#8e8e8e"/><rect x="54" y="528" width="1" height="1" fill="#8e8e8e"/><rect x="54" y="530" width="1" height="1" fill="#8e8e8e"/><rect x="54" y="532" width="1" height="1" fill="#8e8e8e"/><rect x="54" y="534" width="1" height="1" fill="#8e8e8e"/><rect x="54" y="536" width="1" height="1" fill="#8e8e8e"/><rect x="54" y="538" width="1" height="1" fill="#8e8e8e"/><rect x="54" y="540" width="1" height="1" fill="#8e8e8e"/><rect x="54" y="542" width="1" height="1" fill="#8e8e8e"/><rect x="54" y="544" width="1" height="1" fill="#8e8e8e"/><rect x="54" y="546" width="1" height="1" fill="#8e8e8e"/><rect x="54" y="548" width="1" height="1" fill="#8e8e8e"/><rect x="54" y="550" width="1" height="1" fill="#8e8e8e"/><rect x="54" y="552" width="1" height="1" fill="#8e8e8e"/><rect x="54" y="554" width="1" height="1" fill="#8e8e8e"/><rect x="54" y="556" width="1" height="1" fill="#8e8e8e"/><rect x="54" y="558" width="1" height="1" fill="#8e8e8e"/><rect x="54" y="560" width="1" height="1" fill="#8e8e8e"/><rect x="54" y="562" width="1" height="1" fill="#8e8e8e"/><rect x="54" y="564" width="1" height="1" fill="#8e8e8e"/><rect x="54" y="566" width="1" height="1" fill="#8e8e8e"/><rect x="54" y="568" width="1" height="1" fill="#8e8e8e"/><rect x="54" y="570" width="1" height="1" fill="#8e8e8e"/><rect x="54" y="572" width="1" height="1" fill="#8e8e8e"/><rect x="54" y="574" width="1" height="1" fill="#8e8e8e"/><rect x="54" y="576" width="1" height="1" fill="#8e8e8e"/><rect x="54" y="578" width="1" height="1" fill="#8e8e8e"/><rect x="54" y="580" width="1" height="1" fill="#8e8e8e"/><rect x="54" y="582" width="1" height="1" fill="#8e8e8e"/><rect x="54" y="584" width="1" height="1" fill="#8e8e8e"/><rect x="54" y="586" width="1" height="1" fill="#8e8e8e"/><rect x="54" y="588" width="1" height="1" fill="#8e8e8e"/><rect x="54" y="590" width="1" height="1" fill="#8e8e8e"/><rect x="54" y="592" width="1" height="1" fill="#8e8e8e"/><rect x="54" y="594" width="1" height="1" fill="#8e8e8e"/><rect x="54" y="596" width="1" height="1" fill="#8e8e8e"/><rect x="54" y="598" width="1" height="1" fill="#8e8e8e"/><rect x="54" y="600" width="1" height="1" fill="#8e8e8e"/><rect x="54" y="602" width="1" height="1" fill="#8e8e8e"/><rect x="54" y="604" width="1" height="1" fill="#8e8e8e"/><rect x="54" y="606" width="1" height="1" fill="#8e8e8e"/><rect x="54" y="608" width="1" height="1" fill="#8e8e8e"/><rect x="54" y="610" width="1" height="1" fill="#8e8e8e"/><rect x="54" y="612" width="1" height="1" fill="#8e8e8e"/><rect x="54" y="614" width="1" height="1" fill="#8e8e8e"/><rect x="54" y="616" width="1" height="1" fill="#8e8e8e"/><rect x="54" y="618" width="1" height="1" fill="#8e8e8e"/><rect x="54" y="620" width="1" height="1" fill="#8e8e8e"/><rect x="54" y="622" width="1" height="1" fill="#8e8e8e"/><rect x="54" y="624" width="1" height="1" fill="#8e8e8e"/><rect x="54" y="636" width="1" height="1" fill="#8e8e8e"/><rect x="54" y="638" width="1" height="1" fill="#8e8e8e"/><rect x="54" y="640" width="1" height="1" fill="#8e8e8e"/><rect x="54" y="642" width="1" height="1" fill="#8e8e8e"/><rect x="54" y="644" width="1" height="1" fill="#8e8e8e"/><rect x="54" y="646" width="1" height="1" fill="#8e8e8e"/><rect x="73" y="222" width="1" height="1" fill="#8e8e8e"/><rect x="73" y="224" width="1" height="1" fill="#8e8e8e"/><rect x="73" y="226" width="1" height="1" fill="#8e8e8e"/><rect x="73" y="228" width="1" height="1" fill="#8e8e8e"/><rect x="73" y="230" width="1" height="1" fill="#8e8e8e"/><rect x="73" y="232" width="1" height="1" fill="#8e8e8e"/><rect x="73" y="234" width="1" height="1" fill="#8e8e8e"/><rect x="73" y="236" width="1" height="1" fill="#8e8e8e"/><rect x="73" y="238" width="1" height="1" fill="#8e8e8e"/><rect x="73" y="240" width="1" height="1" fill="#8e8e8e"/><rect x="73" y="242" width="1" height="1" fill="#8e8e8e"/><rect x="73" y="244" width="1" height="1" fill="#8e8e8e"/><rect x="73" y="246" width="1" height="1" fill="#8e8e8e"/><rect x="73" y="248" width="1" height="1" fill="#8e8e8e"/><rect x="73" y="250" width="1" height="1" fill="#8e8e8e"/><rect x="73" y="252" width="1" height="1" fill="#8e8e8e"/><rect x="73" y="254" width="1" height="1" fill="#8e8e8e"/><rect x="73" y="256" width="1" height="1" fill="#8e8e8e"/><rect x="73" y="258" width="1" height="1" fill="#8e8e8e"/><rect x="73" y="260" width="1" height="1" fill="#8e8e8e"/><rect x="73" y="262" width="1" height="1" fill="#8e8e8e"/><rect x="73" y="264" width="1" height="1" fill="#8e8e8e"/><rect x="73" y="266" width="1" height="1" fill="#8e8e8e"/><rect x="73" y="268" width="1" height="1" fill="#8e8e8e"/><rect x="73" y="270" width="1" height="1" fill="#8e8e8e"/><rect x="73" y="272" width="1" height="1" fill="#8e8e8e"/><rect x="73" y="274" width="1" height="1" fill="#8e8e8e"/><rect x="73" y="276" width="1" height="1" fill="#8e8e8e"/><rect x="73" y="278" width="1" height="1" fill="#8e8e8e"/><rect x="73" y="280" width="1" height="1" fill="#8e8e8e"/><rect x="73" y="282" width="1" height="1" fill="#8e8e8e"/><rect x="73" y="284" width="1" height="1" fill="#8e8e8e"/><rect x="73" y="286" width="1" height="1" fill="#8e8e8e"/><rect x="73" y="288" width="1" height="1" fill="#8e8e8e"/><rect x="73" y="290" width="1" height="1" fill="#8e8e8e"/><rect x="73" y="292" width="1" height="1" fill="#8e8e8e"/><rect x="73" y="294" width="1" height="1" fill="#8e8e8e"/><rect x="73" y="296" width="1" height="1" fill="#8e8e8e"/><rect x="73" y="298" width="1" height="1" fill="#8e8e8e"/><rect x="73" y="300" width="1" height="1" fill="#8e8e8e"/><rect x="73" y="302" width="1" height="1" fill="#8e8e8e"/><rect x="73" y="304" width="1" height="1" fill="#8e8e8e"/><rect x="73" y="306" width="1" height="1" fill="#8e8e8e"/><rect x="73" y="308" width="1" height="1" fill="#8e8e8e"/><rect x="73" y="310" width="1" height="1" fill="#8e8e8e"/><rect x="73" y="312" width="1" height="1" fill="#8e8e8e"/><rect x="73" y="314" width="1" height="1" fill="#8e8e8e"/><rect x="73" y="316" width="1" height="1" fill="#8e8e8e"/><rect x="73" y="318" width="1" height="1" fill="#8e8e8e"/><rect x="73" y="320" width="1" height="1" fill="#8e8e8e"/><rect x="73" y="322" width="1" height="1" fill="#8e8e8e"/><rect x="73" y="324" width="1" height="1" fill="#8e8e8e"/><rect x="73" y="326" width="1" height="1" fill="#8e8e8e"/><rect x="73" y="328" width="1" height="1" fill="#8e8e8e"/><rect x="73" y="330" width="1" height="1" fill="#8e8e8e"/><rect x="73" y="332" width="1" height="1" fill="#8e8e8e"/><rect x="73" y="334" width="1" height="1" fill="#8e8e8e"/><rect x="73" y="336" width="1" height="1" fill="#8e8e8e"/><rect x="73" y="338" width="1" height="1" fill="#8e8e8e"/><rect x="73" y="340" width="1" height="1" fill="#8e8e8e"/><rect x="73" y="342" width="1" height="1" fill="#8e8e8e"/><rect x="73" y="344" width="1" height="1" fill="#8e8e8e"/><rect x="73" y="346" width="1" height="1" fill="#8e8e8e"/><rect x="73" y="348" width="1" height="1" fill="#8e8e8e"/><rect x="73" y="350" width="1" height="1" fill="#8e8e8e"/><rect x="73" y="352" width="1" height="1" fill="#8e8e8e"/><rect x="73" y="354" width="1" height="1" fill="#8e8e8e"/><rect x="73" y="356" width="1" height="1" fill="#8e8e8e"/><rect x="73" y="358" width="1" height="1" fill="#8e8e8e"/><rect x="73" y="360" width="1" height="1" fill="#8e8e8e"/><rect x="73" y="362" width="1" height="1" fill="#8e8e8e"/><rect x="73" y="364" width="1" height="1" fill="#8e8e8e"/><rect x="73" y="366" width="1" height="1" fill="#8e8e8e"/><rect x="73" y="368" width="1" height="1" fill="#8e8e8e"/><rect x="73" y="370" width="1" height="1" fill="#8e8e8e"/><rect x="73" y="372" width="1" height="1" fill="#8e8e8e"/><rect x="73" y="374" width="1" height="1" fill="#8e8e8e"/><rect x="73" y="376" width="1" height="1" fill="#8e8e8e"/><rect x="73" y="378" width="1" height="1" fill="#8e8e8e"/><rect x="73" y="380" width="1" height="1" fill="#8e8e8e"/><rect x="73" y="382" width="1" height="1" fill="#8e8e8e"/><rect x="73" y="384" width="1" height="1" fill="#8e8e8e"/><rect x="73" y="386" width="1" height="1" fill="#8e8e8e"/><rect x="73" y="388" width="1" height="1" fill="#8e8e8e"/><rect x="73" y="390" width="1" height="1" fill="#8e8e8e"/><rect x="73" y="392" width="1" height="1" fill="#8e8e8e"/><rect x="73" y="394" width="1" height="1" fill="#8e8e8e"/><rect x="73" y="396" width="1" height="1" fill="#8e8e8e"/><rect x="73" y="398" width="1" height="1" fill="#8e8e8e"/><rect x="73" y="400" width="1" height="1" fill="#8e8e8e"/><rect x="73" y="402" width="1" height="1" fill="#8e8e8e"/><rect x="73" y="404" width="1" height="1" fill="#8e8e8e"/><rect x="73" y="406" width="1" height="1" fill="#8e8e8e"/><rect x="73" y="408" width="1" height="1" fill="#8e8e8e"/><rect x="73" y="410" width="1" height="1" fill="#8e8e8e"/><rect x="73" y="412" width="1" height="1" fill="#8e8e8e"/><rect x="73" y="414" width="1" height="1" fill="#8e8e8e"/><rect x="73" y="416" width="1" height="1" fill="#8e8e8e"/><rect x="73" y="418" width="1" height="1" fill="#8e8e8e"/><rect x="73" y="420" width="1" height="1" fill="#8e8e8e"/><rect x="73" y="422" width="1" height="1" fill="#8e8e8e"/><rect x="73" y="424" width="1" height="1" fill="#8e8e8e"/><rect x="73" y="426" width="1" height="1" fill="#8e8e8e"/><rect x="73" y="428" width="1" height="1" fill="#8e8e8e"/><rect x="73" y="430" width="1" height="1" fill="#8e8e8e"/><rect x="73" y="432" width="1" height="1" fill="#8e8e8e"/><rect x="73" y="434" width="1" height="1" fill="#8e8e8e"/><rect x="73" y="436" width="1" height="1" fill="#8e8e8e"/><rect x="73" y="438" width="1" height="1" fill="#8e8e8e"/><rect x="73" y="440" width="1" height="1" fill="#8e8e8e"/><rect x="73" y="442" width="1" height="1" fill="#8e8e8e"/><rect x="73" y="444" width="1" height="1" fill="#8e8e8e"/><rect x="73" y="446" width="1" height="1" fill="#8e8e8e"/><rect x="73" y="448" width="1" height="1" fill="#8e8e8e"/><rect x="73" y="450" width="1" height="1" fill="#8e8e8e"/><rect x="73" y="452" width="1" height="1" fill="#8e8e8e"/><rect x="73" y="454" width="1" height="1" fill="#8e8e8e"/><rect x="73" y="456" width="1" height="1" fill="#8e8e8e"/><rect x="73" y="458" width="1" height="1" fill="#8e8e8e"/><rect x="73" y="460" width="1" height="1" fill="#8e8e8e"/><rect x="73" y="462" width="1" height="1" fill="#8e8e8e"/><rect x="73" y="464" width="1" height="1" fill="#8e8e8e"/><rect x="73" y="466" width="1" height="1" fill="#8e8e8e"/><rect x="73" y="468" width="1" height="1" fill="#8e8e8e"/><rect x="73" y="470" width="1" height="1" fill="#8e8e8e"/><rect x="73" y="472" width="1" height="1" fill="#8e8e8e"/><rect x="73" y="474" width="1" height="1" fill="#8e8e8e"/><rect x="73" y="476" width="1" height="1" fill="#8e8e8e"/><rect x="73" y="478" width="1" height="1" fill="#8e8e8e"/><rect x="73" y="480" width="1" height="1" fill="#8e8e8e"/><rect x="73" y="482" width="1" height="1" fill="#8e8e8e"/><rect x="73" y="484" width="1" height="1" fill="#8e8e8e"/><rect x="73" y="486" width="1" height="1" fill="#8e8e8e"/><rect x="73" y="488" width="1" height="1" fill="#8e8e8e"/><rect x="73" y="490" width="1" height="1" fill="#8e8e8e"/><rect x="73" y="492" width="1" height="1" fill="#8e8e8e"/><rect x="73" y="494" width="1" height="1" fill="#8e8e8e"/><rect x="73" y="496" width="1" height="1" fill="#8e8e8e"/><rect x="73" y="498" width="1" height="1" fill="#8e8e8e"/><rect x="73" y="500" width="1" height="1" fill="#8e8e8e"/><rect x="73" y="502" width="1" height="1" fill="#8e8e8e"/><rect x="73" y="504" width="1" height="1" fill="#8e8e8e"/><rect x="73" y="506" width="1" height="1" fill="#8e8e8e"/><rect x="73" y="508" width="1" height="1" fill="#8e8e8e"/><rect x="73" y="510" width="1" height="1" fill="#8e8e8e"/><rect x="73" y="512" width="1" height="1" fill="#8e8e8e"/><rect x="73" y="514" width="1" height="1" fill="#8e8e8e"/><rect x="73" y="516" width="1" height="1" fill="#8e8e8e"/><rect x="73" y="518" width="1" height="1" fill="#8e8e8e"/><rect x="73" y="520" width="1" height="1" fill="#8e8e8e"/><rect x="73" y="522" width="1" height="1" fill="#8e8e8e"/><rect x="73" y="524" width="1" height="1" fill="#8e8e8e"/><rect x="73" y="526" width="1" height="1" fill="#8e8e8e"/><rect x="73" y="528" width="1" height="1" fill="#8e8e8e"/><rect x="73" y="530" width="1" height="1" fill="#8e8e8e"/><rect x="73" y="532" width="1" height="1" fill="#8e8e8e"/><rect x="73" y="534" width="1" height="1" fill="#8e8e8e"/><rect x="73" y="536" width="1" height="1" fill="#8e8e8e"/><rect x="73" y="538" width="1" height="1" fill="#8e8e8e"/><rect x="73" y="540" width="1" height="1" fill="#8e8e8e"/><rect x="73" y="542" width="1" height="1" fill="#8e8e8e"/><rect x="73" y="544" width="1" height="1" fill="#8e8e8e"/><rect x="73" y="546" width="1" height="1" fill="#8e8e8e"/><rect x="73" y="548" width="1" height="1" fill="#8e8e8e"/><rect x="73" y="550" width="1" height="1" fill="#8e8e8e"/><rect x="73" y="552" width="1" height="1" fill="#8e8e8e"/><rect x="73" y="554" width="1" height="1" fill="#8e8e8e"/><rect x="73" y="556" width="1" height="1" fill="#8e8e8e"/><rect x="73" y="558" width="1" height="1" fill="#8e8e8e"/><rect x="73" y="560" width="1" height="1" fill="#8e8e8e"/><rect x="73" y="562" width="1" height="1" fill="#8e8e8e"/><rect x="73" y="564" width="1" height="1" fill="#8e8e8e"/><rect x="73" y="566" width="1" height="1" fill="#8e8e8e"/><rect x="73" y="568" width="1" height="1" fill="#8e8e8e"/><rect x="73" y="570" width="1" height="1" fill="#8e8e8e"/><rect x="73" y="572" width="1" height="1" fill="#8e8e8e"/><rect x="73" y="574" width="1" height="1" fill="#8e8e8e"/><rect x="73" y="576" width="1" height="1" fill="#8e8e8e"/><rect x="73" y="578" width="1" height="1" fill="#8e8e8e"/><rect x="73" y="580" width="1" height="1" fill="#8e8e8e"/><rect x="73" y="582" width="1" height="1" fill="#8e8e8e"/><rect x="73" y="584" width="1" height="1" fill="#8e8e8e"/><rect x="73" y="586" width="1" height="1" fill="#8e8e8e"/><rect x="73" y="588" width="1" height="1" fill="#8e8e8e"/><rect x="73" y="590" width="1" height="1" fill="#8e8e8e"/><rect x="73" y="592" width="1" height="1" fill="#8e8e8e"/><rect x="73" y="594" width="1" height="1" fill="#8e8e8e"/><rect x="73" y="596" width="1" height="1" fill="#8e8e8e"/><rect x="73" y="598" width="1" height="1" fill="#8e8e8e"/><rect x="73" y="600" width="1" height="1" fill="#8e8e8e"/><rect x="73" y="602" width="1" height="1" fill="#8e8e8e"/><rect x="73" y="604" width="1" height="1" fill="#8e8e8e"/><rect x="73" y="606" width="1" height="1" fill="#8e8e8e"/><rect x="73" y="608" width="1" height="1" fill="#8e8e8e"/><rect x="73" y="610" width="1" height="1" fill="#8e8e8e"/><rect x="73" y="612" width="1" height="1" fill="#8e8e8e"/><rect x="73" y="614" width="1" height="1" fill="#8e8e8e"/></svg><div class="r" style="left:348px;top:78px;width:16px;height:581px;background:#f0f0f0;"></div><div class="r" style="left:348px;top:368px;width:15px;height:274px;background:#cdcdcd;"></div><svg width="1027" height="743" style="left:0;top:0"><path d="M352 89.5 L355.5 85.5 L359 89.5" fill="none" stroke="#606060" stroke-width="1.7"/><path d="M352 648.5 L355.5 652.5 L359 648.5" fill="none" stroke="#606060" stroke-width="1.7"/></svg><div class="r" style="left:22px;top:669px;width:261px;height:21px;background:#fff;border:1px solid #7a7a7a;"></div><svg width="1027" height="743" style="left:0;top:0"><path d="M269.5 677 L273.5 681 L277.5 677" fill="none" stroke="#444" stroke-width="1.1"/></svg><div class="r" style="left:293px;top:669px;width:73px;height:21px;background:#e1e1e1;border:1px solid #adadad;"></div><div class="t" style="left:311.6px;top:673px;font-size:12px;line-height:14px;color:#000;letter-spacing:-0.660px;">Search</div><div class="r" style="left:865px;top:713px;width:73px;height:21px;background:#e1e1e1;border:2px solid #0078d7;"></div><div class="t" style="left:883.9px;top:718px;font-size:11px;line-height:13px;color:#000;letter-spacing:-0.700px;">Tamam</div><div class="r" style="left:946px;top:713px;width:73px;height:21px;background:#e1e1e1;border:1px solid #adadad;"></div><div class="t" style="left:969.6px;top:718px;font-size:11px;line-height:13px;color:#000;letter-spacing:0.650px;">İptal</div><div class="r" style="left:376px;top:77px;width:396px;height:110px;border:1px solid #dcdcdc;"></div><div class="r" style="left:383px;top:76px;width:63px;height:3px;background:#fff;"></div><div class="t" style="left:384px;top:72px;font-size:11px;line-height:13px;color:#000;letter-spacing:-0.291px;">Dimensions :</div><div class="r" style="left:376px;top:196px;width:396px;height:138px;border:1px solid #dcdcdc;"></div><div class="r" style="left:383px;top:195px;width:60px;height:3px;background:#fff;"></div><div class="t" style="left:384px;top:191px;font-size:11px;line-height:13px;color:#000;letter-spacing:0.000px;">Properties :</div><div class="t" style="left:386.5px;top:94px;font-size:11px;line-height:13px;color:#000;letter-spacing:0.000px;">X</div><div class="t" style="left:398.3px;top:94px;font-size:11px;line-height:13px;color:#000;letter-spacing:0.343px;">length :</div><div class="r" style="left:466px;top:89px;width:75px;height:20px;background:#fff;border:1px solid #7a7a7a;"></div><div class="t" style="left:471.5px;top:93px;font-size:11px;line-height:13px;color:#000;letter-spacing:-0.214px;">181.7 cm</div><div class="t" style="left:575.6px;top:94px;font-size:11px;line-height:13px;color:#000;letter-spacing:0.100px;">X Percent (%) :</div><div class="r" style="left:661px;top:89px;width:68px;height:20px;background:#fff;border:1px solid #7a7a7a;"></div><div class="t" style="left:667px;top:93px;font-size:11px;line-height:13px;color:#000;letter-spacing:-0.400px;">100</div><div class="t" style="left:387.5px;top:118px;font-size:11px;line-height:13px;color:#000;letter-spacing:0.000px;">Y</div><div class="t" style="left:398.3px;top:118px;font-size:11px;line-height:13px;color:#000;letter-spacing:0.343px;">length :</div><div class="r" style="left:466px;top:114px;width:75px;height:20px;background:#fff;border:1px solid #7a7a7a;"></div><div class="t" style="left:472.5px;top:118px;font-size:11px;line-height:13px;color:#000;letter-spacing:-0.600px;">415 cm</div><div class="t" style="left:576.6px;top:118px;font-size:11px;line-height:13px;color:#000;letter-spacing:0.029px;">Y Percent (%) :</div><div class="r" style="left:661px;top:114px;width:68px;height:20px;background:#fff;border:1px solid #7a7a7a;"></div><div class="t" style="left:667px;top:118px;font-size:11px;line-height:13px;color:#000;letter-spacing:-0.400px;">100</div><div class="t" style="left:387.5px;top:142px;font-size:11px;line-height:13px;color:#000;letter-spacing:0.000px;">Z</div><div class="t" style="left:398.3px;top:142px;font-size:11px;line-height:13px;color:#000;letter-spacing:0.343px;">length :</div><div class="r" style="left:466px;top:138px;width:75px;height:20px;background:#fff;border:1px solid #7a7a7a;"></div><div class="t" style="left:471.5px;top:142px;font-size:11px;line-height:13px;color:#000;letter-spacing:-0.214px;">157.7 cm</div><div class="t" style="left:576.6px;top:142px;font-size:11px;line-height:13px;color:#000;letter-spacing:0.100px;">Z Percent (%) :</div><div class="r" style="left:661px;top:138px;width:68px;height:20px;background:#fff;border:1px solid #7a7a7a;"></div><div class="t" style="left:667px;top:142px;font-size:11px;line-height:13px;color:#000;letter-spacing:-0.400px;">100</div><svg width="1027" height="743" style="left:0;top:0"><rect x="388.5" y="167.5" width="12" height="12" fill="#fff" stroke="#333"/><path d="M390.5 173.5 L393 176 L398.5 170.5" fill="none" stroke="#333" stroke-width="1.2"/></svg><div class="t" style="left:402.8px;top:168px;font-size:11px;line-height:13px;color:#000;letter-spacing:-0.200px;">Same ratio</div><div class="t" style="left:386.6px;top:215px;font-size:11px;line-height:13px;color:#000;letter-spacing:0.767px;">ID :</div><div class="r" style="left:466px;top:210px;width:75px;height:20px;background:#fff;border:1px solid #7a7a7a;"></div><div class="t" style="left:470.5px;top:214px;font-size:11px;line-height:13px;color:#000;letter-spacing:0.000px;">L001</div><div class="t" style="left:386.6px;top:238px;font-size:11px;line-height:13px;color:#000;letter-spacing:0.000px;">Elevation :</div><div class="r" style="left:466px;top:234px;width:75px;height:20px;background:#fff;border:1px solid #7a7a7a;"></div><div class="t" style="left:471.2px;top:238px;font-size:11px;line-height:13px;color:#000;letter-spacing:-0.467px;">7 cm</div><div class="t" style="left:575.9px;top:214px;font-size:11px;line-height:13px;color:#000;letter-spacing:0.017px;">Color :</div><div class="t" style="left:576.9px;top:238px;font-size:11px;line-height:13px;color:#000;letter-spacing:-0.317px;">Angle :</div><div class="r" style="left:662px;top:211px;width:73px;height:21px;background:#f0f0f0;"></div><div class="r" style="left:735px;top:210px;width:1px;height:23px;background:#000;"></div><div class="r" style="left:662px;top:232px;width:74px;height:1px;background:#000;"></div><div class="r" style="left:664px;top:213px;width:33px;height:17px;background:#fff;border:1px solid #7a7a7a;"></div><div class="r" style="left:696px;top:213px;width:38px;height:17px;background:#7f5330;border:2px solid #111;border-left:1px solid #444;"></div><div class="t" style="left:668.4px;top:216px;font-size:11px;line-height:13px;color:#000;letter-spacing:0.550px;">115</div><div class="r" style="left:661px;top:234px;width:75px;height:20px;background:#fff;border:1px solid #7a7a7a;"></div><div class="t" style="left:667px;top:238px;font-size:11px;line-height:13px;color:#000;letter-spacing:-0.182px;width:66px;overflow:hidden;">17.732583908</div><svg width="1027" height="743" style="left:0;top:0"><rect x="388.5" y="274.5" width="12" height="12" fill="#fff" stroke="#333"/><path d="M390.5 280.5 L393 283 L398.5 277.5" fill="none" stroke="#333" stroke-width="1.2"/></svg><div class="t" style="left:402.8px;top:275px;font-size:11px;line-height:13px;color:#000;letter-spacing:0.250px;">Pattern :</div><div class="r" style="left:468px;top:272px;width:121px;height:19px;border:1px solid #000;background:#ece4dc;"></div><svg width="1027" height="743" style="left:0;top:0"><defs><pattern id="patb" x="469" y="271" width="8" height="8" patternUnits="userSpaceOnUse"><path d="M2 2h3v3h-3z M3 3h1v1h-1z M6 6h3v3h-3z M7 7h1v1h-1z M-2 6h3v3h-3z M-1 7h1v1h-1z M6 -2h3v3h-3z M7 -1h1v1h-1z" fill="#dedcf0" fill-rule="evenodd" shape-rendering="crispEdges"/></pattern></defs><rect x="469" y="273" width="119" height="17" fill="url(#patb)"/><path d="M469.5 289 L469.5 273.5 L588 273.5" stroke="#fff" fill="none"/></svg><div class="r" style="left:590px;top:271px;width:1px;height:22px;background:#000;"></div><div class="r" style="left:467px;top:292px;width:124px;height:1px;background:#000;"></div><div class="t" style="left:623.7px;top:276px;font-size:11px;line-height:13px;color:#000;letter-spacing:0.000px;">Face Count :</div><div class="t" style="left:708.4px;top:276px;font-size:11px;line-height:13px;color:#000;letter-spacing:0.050px;">38367</div><div class="t" style="left:386.6px;top:310px;font-size:11px;line-height:13px;color:#000;letter-spacing:0.011px;">Material :</div><div class="r" style="left:466px;top:305px;width:125px;height:21px;background:#e1e1e1;border:1px solid #adadad;"></div><div class="t" style="left:468.5px;top:310px;font-size:11px;line-height:13px;color:#000;letter-spacing:-0.150px;">rim</div><div class="t" style="left:598.3px;top:309px;font-size:11px;line-height:13px;color:#000;letter-spacing:-0.100px;">---&gt;</div><div class="r" style="left:622px;top:305px;width:135px;height:24px;background:#fff;border:1px solid #7a7a7a;"></div><div class="t" style="left:623.8px;top:311px;font-size:11px;line-height:13px;color:#000;letter-spacing:-0.150px;">rim</div><svg width="1027" height="743" style="left:0;top:0"><path d="M577.5 313.5 L581.5 317.5 L585.5 313.5" fill="none" stroke="#444" stroke-width="1.1"/><path d="M743.5 315.5 L747.5 319.5 L751.5 315.5" fill="none" stroke="#444" stroke-width="1.1"/></svg><div class="t" style="left:375.5px;top:344px;font-size:11px;line-height:13px;color:#000;letter-spacing:0.075px;">Description :</div><div class="r" style="left:466px;top:340px;width:306px;height:20px;background:#fff;border:1px solid #cccccc;"></div><div class="t" style="left:471.5px;top:344px;font-size:11px;line-height:13px;color:#7a7a7a;letter-spacing:-0.300px;">vw</div><svg width="1027" height="743" style="left:0;top:0"><rect x="782.5" y="272.5" width="12" height="12" fill="#fff" stroke="#333"/></svg><div class="t" style="left:797px;top:273px;font-size:11px;line-height:13px;color:#000;letter-spacing:-0.160px;">Draw as bounding box in 3D</div><svg width="1027" height="743" style="left:0;top:0"><rect x="782.5" y="295.5" width="12" height="12" fill="#fff" stroke="#333"/><path d="M784.5 301.5 L787 304 L792.5 298.5" fill="none" stroke="#333" stroke-width="1.2"/></svg><div class="t" style="left:797px;top:296px;font-size:11px;line-height:13px;color:#000;letter-spacing:-0.118px;">Cut holes in hatch</div><svg width="1027" height="743" style="left:0;top:0"><rect x="782.5" y="318.5" width="12" height="12" fill="#fff" stroke="#333"/><path d="M784.5 324.5 L787 327 L792.5 321.5" fill="none" stroke="#333" stroke-width="1.2"/></svg><div class="t" style="left:797px;top:319px;font-size:11px;line-height:13px;color:#000;letter-spacing:-0.185px;">Show materials in 3D preview</div><svg width="1027" height="743" style="left:0;top:0"><rect x="782.5" y="341.5" width="12" height="12" fill="#fff" stroke="#333"/></svg><div class="t" style="left:798px;top:342px;font-size:11px;line-height:13px;color:#000;letter-spacing:-0.125px;">Always face to camera</div><div class="r" style="left:782px;top:76px;width:224px;height:187px;background:#fff;border:2px solid #000;"></div><div class="r" style="left:374px;top:374px;width:632px;height:317px;background:#f6f6f6;border:2px solid #0a0a20;box-shadow:inset 0 0 0 1px #fff;"></div><svg width="1027" height="743" style="left:0;top:0"><g fill="none" stroke="#000" stroke-width="1" shape-rendering="crispEdges"><path d="M886.5 87.1 L877.9 89.4 L871.0 93.4 L868.7 100.3 L866.4 106.6 L865.9 125.5 L865.5 165.0 L865.5 195.9 L864.4 197.0 L864.2 217.6 L865.9 223.4 L867.6 225.6 L869.3 239.9 L873.9 243.9 L881.3 246.2 L897.3 246.5 L912.2 246.2 L919.6 243.9 L924.2 239.9 L925.9 225.6 L929.4 217.6 L929.9 198.2 L928.2 195.9 L928.2 165.0 L928.2 125.5 L927.3 106.6 L925.4 100.9 L922.5 93.4 L916.8 89.4 L907.6 87.1 Z"/><path d="M872.2 132.3 L885.9 129.5 L896.8 128.3 L907.6 129.5 L921.4 132.3 L922.5 135.8 L917.4 154.1 L897.3 153.5 L876.7 154.1 L871.6 135.8 Z"/><path d="M877.9 204.5 L889.3 205.0 L904.8 205.0 L915.6 204.5 L917.4 208.5 L918.5 226.2 L907.6 227.9 L897.3 228.5 L885.9 227.9 L875.4 226.2 L875.6 214.2 Z"/><path d="M869.6 139.2 L876.2 166.0 L875.6 175.3 L868.7 170.7 L867.6 142.6 Z"/><path d="M924.4 139.2 L917.8 166.0 L917.4 175.3 L924.8 170.7 L926.4 142.6 Z"/><path d="M868.5 177.0 L871.0 177.0 L876.2 178.7 L876.2 195.3 L872.2 207.3 L869.6 210.2 L868.5 206.2 Z"/><path d="M925.0 177.0 L922.5 177.0 L917.7 178.7 L917.7 195.9 L923.6 210.2 L925.4 208.5 Z"/><path d="M865.9 143.5 L862.8 143.5 L862.8 145.5 L865 145.5 M928.2 143.5 L931.2 143.5 L931.2 145.5 L929 145.5"/></g></svg><svg width="1027" height="743" style="left:0;top:0"><defs><clipPath id="v3d"><rect x="377" y="377" width="626" height="311"/></clipPath></defs><g clip-path="url(#v3d)"><path d="M705.59 454.33 L2191.54 659.16 M693.78 455.56 L2177.15 678.30 M681.07 456.88 L2161.08 700.93 M667.35 458.31 L2142.89 728.09 M652.51 459.86 L2121.91 761.31 M636.39 461.54 L2097.04 802.86 M618.83 463.36 L2066.46 856.27 M599.62 465.37 L2026.72 927.31 M578.53 467.56 L1970.80 1025.74 M555.24 469.99 L1882.52 1168.81 M529.42 472.68 L1719.81 1385.36 M500.62 475.68 L1368.39 1699.19 M468.28 479.05 L638.50 1969.36 M431.73 482.86 L-218.26 1834.72 M390.07 487.20 L-708.60 1508.43 M705.59 454.33 L-786.33 609.76 M716.40 455.81 L-774.18 623.61 M728.21 457.44 L-760.68 639.71 M741.17 459.23 L-745.51 658.68 M755.45 461.20 L-728.31 681.38 M771.26 463.38 L-708.49 709.02 M788.88 465.81 L-685.20 743.45 M808.63 468.53 L-657.06 787.55 M830.90 471.60 L-621.62 846.01 M856.24 475.09 L-574.05 927.05 M885.31 479.10 L-503.45 1045.98 M919.00 483.74 L-380.59 1232.79 M958.51 489.19 L-112.67 1539.22 M1005.50 495.67 L567.48 1930.29" stroke="#9fa5a1" stroke-width="1" fill="none"/></g></svg><svg width="1027" height="743" style="left:0;top:0"><g clip-path="url(#v3d)"><defs>
<linearGradient id="hoodg" x1="0" y1="0" x2="1" y2="1"><stop offset="0" stop-color="#393939"/><stop offset="0.6" stop-color="#3b3b3b"/><stop offset="1" stop-color="#3f3f3f"/></linearGradient>
<linearGradient id="bumpg" x1="0" y1="0" x2="1" y2="0"><stop offset="0" stop-color="#575757"/><stop offset="0.35" stop-color="#4a4a4a"/><stop offset="1" stop-color="#383838"/></linearGradient>
<linearGradient id="fendg" x1="0" y1="0" x2="1" y2="1"><stop offset="0" stop-color="#505050"/><stop offset="0.5" stop-color="#5a5a5a"/><stop offset="1" stop-color="#525252"/></linearGradient>
<linearGradient id="sideg" x1="0" y1="0" x2="1" y2="1"><stop offset="0" stop-color="#4a4a4a"/><stop offset="1" stop-color="#474747"/></linearGradient>
</defs><path d="M562.3 492.1 L567.1 487.3 L576.8 483.6 L589.2 478.3 L616.0 471.8 L643.8 470.0 L666.0 470.9 L682.7 476.5 L699.3 486.6 L712.3 498.7 L725.2 511.6 L735.4 519.9 L758.0 530.7 L778.5 543.5 L796.4 556.3 L805.3 566.5 L809.1 576.7 L814.3 584.4 L815.5 597.2 L810.0 612.0 L806.6 622.8 L775.9 652.2 L763.1 658.6 L742.6 671.4 L714.5 676.5 L694.0 671.4 L683.8 663.7 L678.4 653.0 L660.0 640.0 L640.3 614.2 L636.7 620.0 L580.8 559.9 L575.0 552.0 L563.5 526.0 L561.0 521.2 L560.4 501.8 Z" fill="#525252" /><path d="M589.2 478.3 L616.0 471.8 L643.8 470.0 L666.0 470.9 L682.7 476.5 L699.3 486.6 L624.4 501.4 L610.5 488.5 L599.4 482.9 Z" fill="#3c3c3c" /><path d="M569.5 504.2 L579.2 487.3 L587.7 483.6 L598.0 485.4 L591.3 521.2 L584.0 515.1 Z" fill="#060606" /><path d="M600.0 487.0 L609.4 491.8 L618.7 505.8 L625.7 524.5 L629.6 538.5 L630.9 554.2 L620.7 541.2 L595.0 527.0 L598.5 506.0 Z" fill="#040404" /><path d="M600.0 482.5 L615.6 490.2 L625.0 502.7 L632.7 521.4 L639.0 544.8 L643.6 551.0 L634.0 556.0 L630.9 554.2 L629.6 538.5 L625.7 524.5 L618.7 505.8 L609.4 491.8 L600.0 487.0 Z" fill="#545454" /><path d="M624.5 501.0 L699.5 486.5 L712.3 498.7 L725.2 511.6 L735.4 519.9 L732.6 522.7 L716.0 528.3 L684.5 537.5 L643.6 551.0 L637.4 535.4 L631.2 516.7 Z" fill="#020202" /><path d="M646 547 L690 531 L733 519" stroke="#1c1c1c" stroke-width="1" fill="none"/><path d="M644.2 551.2 L684.5 537.5 L716.0 528.3 L735.0 519.2 L758.0 530.7 L778.5 543.5 L796.4 556.3 L805.3 566.5 L801.5 574.2 L788.7 602.3 L758.0 616.4 L747.8 616.4 L715.8 626.6 L699.2 607.4 L676.2 581.8 L655.7 563.9 Z" fill="url(#hoodg)" /><path d="M640.0 552.0 L644.2 551.2 L655.7 563.9 L676.2 581.8 L699.2 607.4 L715.8 626.6 L682.6 627.9 L672.1 627.0 L660.0 605.0 L645.7 597.3 L636.7 597.0 L632.4 578.8 L634.0 560.0 Z" fill="url(#fendg)" /><path d="M673.6 627.9 L717.0 643.2 L759.3 635.5 L806.6 601.0 L814.3 584.4 L815.5 597.2 L810.0 612.0 L806.6 622.8 L775.9 652.2 L763.1 658.6 L742.6 671.4 L714.5 676.5 L694.0 671.4 L683.8 663.7 L678.7 643.2 Z" fill="url(#bumpg)" /><path d="M690 650 C705 657 720 660 735 657" stroke="#707070" stroke-width="1.5" fill="none" opacity="0.8"/><path d="M724.7 667.5 L768.2 655.0 L766.0 658.5 L726.0 670.5 Z" fill="#252525" /><path d="M773.0 646.0 L803.5 618.0 L806.5 616.5 L805.0 621.5 L786.0 641.5 L774.0 652.5 Z" fill="#bababa" /><path d="M715.8 626.6 L747.8 616.4 L759.3 635.5 L720.9 644.5 Z" fill="#020202" /><path d="M801.5 569.0 L806.6 566.5 L809.1 576.7 L805.3 592.0 L801.5 587.0 Z" fill="#030303" /><path d="M758.5 618.8 L803.3 587.3 L806.5 600.0 L768.2 630.9 Z" fill="#4a4a4a" /><path d="M759.9 620.5 L803.7 589.1" stroke="#161616" stroke-width="1.6"/><path d="M762.2 623.4 L804.5 592.1" stroke="#161616" stroke-width="1.6"/><path d="M764.5 626.3 L805.3 595.2" stroke="#161616" stroke-width="1.6"/><path d="M766.8 629.2 L806.1 598.2" stroke="#161616" stroke-width="1.6"/><ellipse cx="789.4" cy="609" rx="4.3" ry="7.2" transform="rotate(-10 789.4 609)" fill="#a8a8a8" stroke="#555" stroke-width="0.8"/><ellipse cx="657" cy="628" rx="19" ry="33" transform="rotate(-22 657 628)" fill="#202020"/><ellipse cx="661.5" cy="632.5" rx="18.5" ry="34" transform="rotate(-22 661.5 632.5)" fill="#161616"/><ellipse cx="657.5" cy="633.5" rx="13.2" ry="25" transform="rotate(-22 657.5 633.5)" fill="#efefef"/><ellipse cx="657.5" cy="633.5" rx="4" ry="6" transform="rotate(-22 657.5 633.5)" fill="#d6d6d6"/><ellipse cx="651" cy="617.5" rx="1.7" ry="4" transform="rotate(-40 651 617.5)" fill="#1c1c1c"/><ellipse cx="663.5" cy="628" rx="1.7" ry="4" transform="rotate(-10 663.5 628)" fill="#1c1c1c"/><ellipse cx="666.5" cy="647" rx="1.7" ry="4" transform="rotate(-60 666.5 647)" fill="#1c1c1c"/><ellipse cx="652.5" cy="651" rx="1.7" ry="4" transform="rotate(20 652.5 651)" fill="#1c1c1c"/><ellipse cx="647" cy="634" rx="1.7" ry="4" transform="rotate(-20 647 634)" fill="#1c1c1c"/><path d="M672.0 627.0 L686.0 640.0 L688.0 664.0 L683.8 663.7 L678.4 653.0 Z" fill="#555555" /><path d="M684 664 L695 672 L712 676.5 L730 675 L750 668 L768 656.5 L776 651" stroke="#1e1e1e" stroke-width="1.6" fill="none"/><ellipse cx="573" cy="543" rx="6.5" ry="17.5" transform="rotate(-22 573 543)" fill="#151515"/><ellipse cx="570.6" cy="542.2" rx="3.7" ry="13.2" transform="rotate(-22 570.6 542.2)" fill="#e8e8e8"/><path d="M576.0 534.0 L598.0 560.0 L580.8 559.9 L578.0 556.0 Z" fill="#525252" /><path d="M603.4 543.0 L620.7 539.4 L626.0 546.0 L630.3 555.0 L622.0 553.0 L605.9 551.4 Z" fill="#333333" /><path d="M621.7 546.5 L626.0 546.0 L630.3 555.0 L624.0 553.0 Z" fill="#151515" /><ellipse cx="729" cy="509.5" rx="2.6" ry="3.8" transform="rotate(-30 729 509.5)" fill="#2c2c2c"/><path d="M607.2 451.8 L618.4 471.8" stroke="#333" stroke-width="0.9"/><path d="M634.6 572.5 L638.5 572.0 L640.0 576.5 L636.0 577.1 Z" fill="#f0dc00" /><path d="M560.4 498.0 L561.5 498.0 L561.5 504.0 L560.4 504.0 Z" fill="#b08040" /><path d="M632.4 578.8 L631.4 609 M600 488 L592 524" stroke="#2e2e2e" stroke-width="0.8" fill="none" stroke-dasharray="1.5 1.5"/></g></svg><div class="t" style="left:844.5px;top:670px;font-size:12px;line-height:14px;color:#253535;letter-spacing:0.107px;">Double click for fullscreen.</div></body></html>
